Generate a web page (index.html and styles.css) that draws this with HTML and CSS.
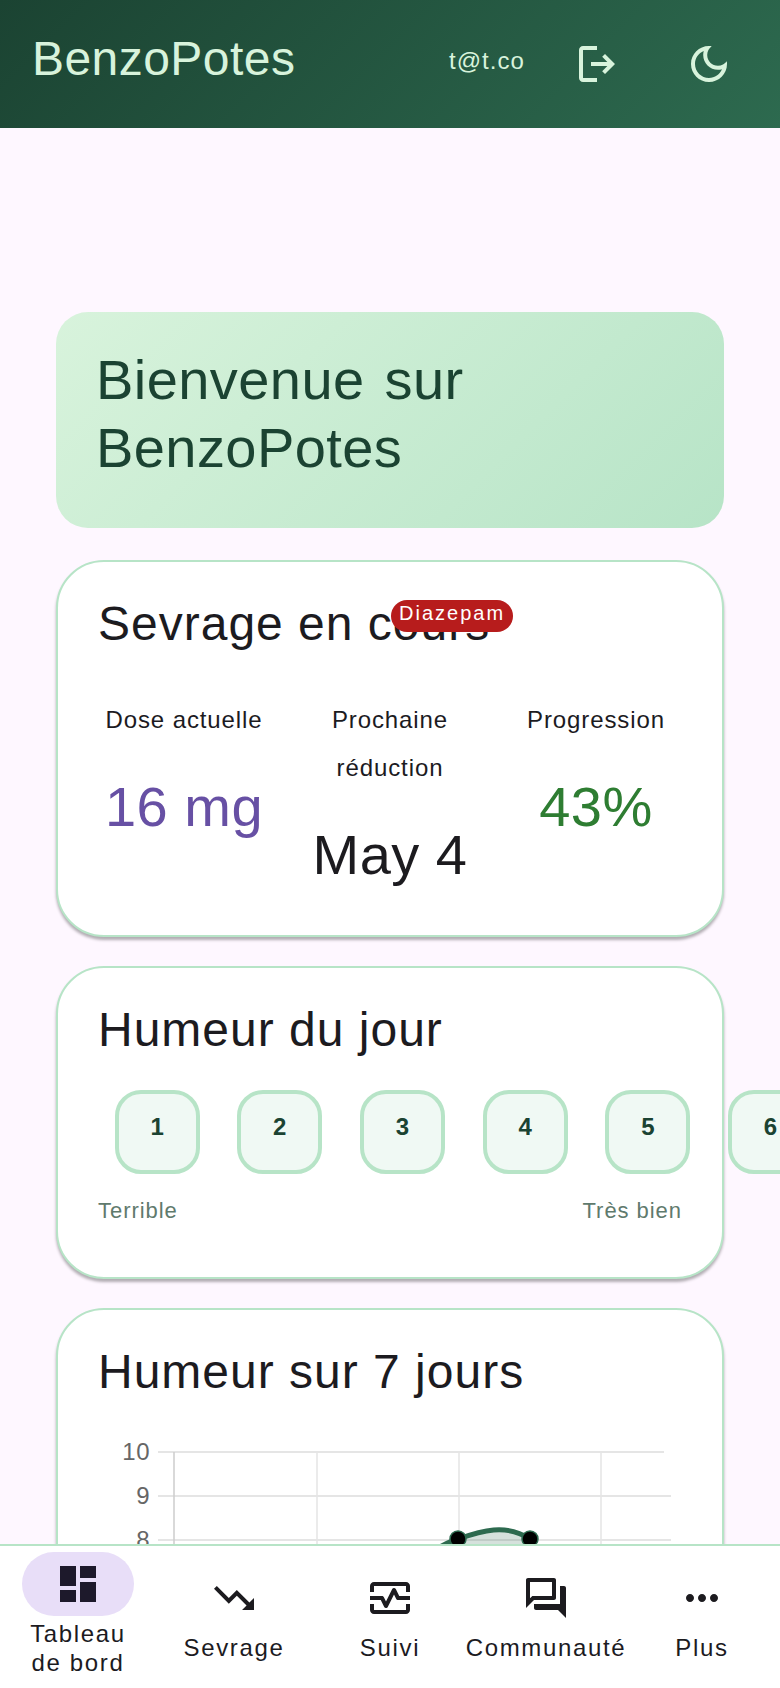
FILE: index.html
```html
<!DOCTYPE html>
<html lang="fr">
<head>
<meta charset="utf-8">
<title>BenzoPotes</title>
<link rel="stylesheet" href="styles.css">
</head>
<body>
<div class="app">
  <header class="topbar">
    <div class="brand">BenzoPotes</div>
    <div class="user">t@t.co</div>
    <button class="icon-btn logout" aria-label="Déconnexion">
      <svg viewBox="0 0 24 24"><path d="M5 5h7V3H5c-1.1 0-2 .9-2 2v14c0 1.1.9 2 2 2h7v-2H5V5zm11 2l5 5-5 5-1.41-1.41L17.17 13H9v-2h8.17l-2.58-2.59L16 7z"/></svg>
    </button>
    <button class="icon-btn moon" aria-label="Thème">
      <svg viewBox="0 0 24 24"><path d="M9.37 5.51c-.18.64-.27 1.31-.27 1.99 0 4.08 3.32 7.4 7.4 7.4.68 0 1.35-.09 1.99-.27C17.45 17.19 14.93 19 12 19c-3.86 0-7-3.14-7-7 0-2.93 1.81-5.45 4.37-6.49zM12 3c-4.97 0-9 4.03-9 9s4.03 9 9 9 9-4.03 9-9c0-.46-.04-.92-.1-1.36-.98 1.37-2.58 2.26-4.4 2.26-2.98 0-5.4-2.42-5.4-5.4 0-1.81.89-3.42 2.26-4.4-.44-.06-.9-.1-1.36-.1z"/></svg>
    </button>
  </header>

  <main class="content">
    <section class="hero"><h1>Bienvenue sur BenzoPotes</h1></section>

    <section class="card card-taper">
      <div class="card-head">
        <h2>Sevrage en cours</h2>
        <span class="badge">Diazepam</span>
      </div>
      <div class="stats">
        <div class="stat"><div class="stat-label">Dose actuelle</div><div class="stat-value purple">16 mg</div></div>
        <div class="stat"><div class="stat-label">Prochaine réduction</div><div class="stat-value">May 4</div></div>
        <div class="stat"><div class="stat-label">Progression</div><div class="stat-value green">43%</div></div>
      </div>
    </section>

    <section class="card card-mood">
      <h2>Humeur du jour</h2>
      <div class="moods">
        <button class="mood">1</button><button class="mood">2</button><button class="mood">3</button><button class="mood">4</button><button class="mood">5</button><button class="mood">6</button><button class="mood">7</button>
      </div>
      <div class="mood-scale"><span>Terrible</span><span>Très bien</span></div>
    </section>

    <section class="card card-chart">
      <h2>Humeur sur 7 jours</h2>
      <svg class="chart" viewBox="0 0 610 300">
        <g class="grid-h">
          <line x1="62" y1="11" x2="568" y2="11"/>
          <line x1="62" y1="55" x2="575" y2="55"/>
          <line x1="62" y1="99" x2="575" y2="99"/>
          <line x1="62" y1="143" x2="575" y2="143"/>
        </g>
        <g class="grid-v">
          <line x1="221" y1="11" x2="221" y2="200"/>
          <line x1="363" y1="11" x2="363" y2="200"/>
          <line x1="505" y1="11" x2="505" y2="200"/>
        </g>
        <line class="axis" x1="78" y1="11" x2="78" y2="200"/>
        <text class="tick" x="54" y="19">10</text>
        <text class="tick" x="54" y="63">9</text>
        <text class="tick" x="54" y="107">8</text>
        <path class="area" d="M300 135C325 118 345 103 362 98C385 90 410 82 434 98L434 200L300 200Z"/>
        <path class="line" d="M300 135C325 118 345 103 362 98C385 90 410 82 434 98"/>
        <circle class="dot" cx="362" cy="98" r="8"/>
        <circle class="dot" cx="434" cy="98" r="8"/>
      </svg>
    </section>
  </main>

  <nav class="bottom-nav">
    <a class="nav-item active">
      <span class="nav-icon"><svg viewBox="0 0 24 24"><path d="M3 13h8V3H3v10zm0 8h8v-6H3v6zm10 0h8V11h-8v10zm0-18v6h8V3h-8z"/></svg></span>
      <span class="nav-label">Tableau de bord</span>
    </a>
    <a class="nav-item">
      <span class="nav-icon"><svg viewBox="0 0 24 24"><path d="M16 18l2.29-2.29-4.88-4.88-4 4L2 7.41 3.41 6l6 6 4-4 6.3 6.29L22 12v6z"/></svg></span>
      <span class="nav-label">Sevrage</span>
    </a>
    <a class="nav-item">
      <span class="nav-icon"><svg viewBox="0 0 24 24"><path d="M20 4H4c-1.1 0-2 .9-2 2v3h2V6h16v3h2V6c0-1.1-.9-2-2-2zM20 18H4v-3H2v3c0 1.1.9 2 2 2h16c1.1 0 2-.9 2-2v-3h-2v3zM14.89 7.55c-.34-.68-1.45-.68-1.79 0L10 13.76l-1.11-2.21C8.72 11.21 8.37 11 8 11H2v2h5.38l1.72 3.45c.18.34.52.55.9.55s.72-.21.89-.55L14 10.24l1.11 2.21c.17.34.52.55.89.55h6v-2h-5.38l-1.72-3.45z"/></svg></span>
      <span class="nav-label">Suivi</span>
    </a>
    <a class="nav-item">
      <span class="nav-icon"><svg viewBox="0 0 24 24"><path d="M15 4v7H5.17L4 12.17V4h11m1-2H3c-.55 0-1 .45-1 1v14l4-4h10c.55 0 1-.45 1-1V3c0-.55-.45-1-1-1zm5 4h-2v9H6v2c0 .55.45 1 1 1h11l4 4V7c0-.55-.45-1-1-1z"/></svg></span>
      <span class="nav-label">Communauté</span>
    </a>
    <a class="nav-item">
      <span class="nav-icon"><svg viewBox="0 0 24 24"><path d="M6 10c-1.1 0-2 .9-2 2s.9 2 2 2 2-.9 2-2-.9-2-2-2zm12 0c-1.1 0-2 .9-2 2s.9 2 2 2 2-.9 2-2-.9-2-2-2zm-6 0c-1.1 0-2 .9-2 2s.9 2 2 2 2-.9 2-2-.9-2-2-2z"/></svg></span>
      <span class="nav-label">Plus</span>
    </a>
  </nav>
</div>
</body>
</html>
```
FILE: styles.css
```css
* { box-sizing: border-box; }
html, body { margin: 0; height: 100%; overflow: hidden; }
body { background: #fef7ff; color: #1c1b1f; font-family: "Liberation Sans", Arial, sans-serif; }
.app { height: 1688px; overflow: hidden; }

.topbar {
  height: 128px;
  display: flex;
  align-items: center;
  padding: 0 47px 0 32px;
  color: #d8f3dc;
  background: linear-gradient(135deg, #1b4332, #2d6a4f);
}
.brand { font-size: 48px; letter-spacing: 0.45px; line-height: 58px; margin-right: auto; padding-bottom: 10px; }
.user { font-size: 24px; letter-spacing: 1.05px; margin-top: -6px; }
.icon-btn { border: 0; padding: 0; background: none; display: flex; }
.icon-btn svg { width: 48px; height: 48px; fill: #d8f3dc; display: block; }
.logout { margin-left: 48px; }
.moon { margin-left: 64px; }

.content { padding: 184px 56px 0; display: flex; flex-direction: column; gap: 29px; }
.hero {
  height: 216px;
  padding: 34px 40px;
  margin-bottom: 3px;
  border-radius: 32px;
  background: linear-gradient(135deg, #d8f3dc, #b7e4c7);
  color: #1b4332;
}
.hero h1 { margin: 0; font-size: 56px; line-height: 68px; font-weight: 400; letter-spacing: 0.43px; word-spacing: 4px; }

.card {
  background: #fff;
  border: 2px solid #b7e4c7;
  border-radius: 48px;
  padding: 33px 40px 46px;
  box-shadow: 0 3px 3px rgba(0, 0, 0, 0.3);
}
.card h2 { margin: 0; font-size: 48px; line-height: 58px; font-weight: 400; letter-spacing: 1px; }
.card-head { position: relative; }
.badge {
  position: absolute;
  left: 293px;
  top: 5px;
  height: 32px;
  line-height: 26px;
  padding: 0 8px;
  border-radius: 16px;
  background: #b71c1c;
  color: #fff;
  font-size: 20px;
  letter-spacing: 2px;
}
.stats { display: grid; grid-template-columns: repeat(3, 176px); gap: 30px; margin: 43px -2px 0; text-align: center; }
.stat-label { font-size: 24px; line-height: 48px; letter-spacing: 0.9px; }
.stat-value { font-size: 56px; line-height: 68px; margin-top: 29px; letter-spacing: 0.5px; }
.purple { color: #6750a4; }
.green { color: #2e7d32; }

.moods { display: flex; gap: 37.7px; margin-top: 31px; padding-left: 16.6px; }
.mood {
  flex: none;
  width: 85px;
  height: 84px;
  padding: 0 0 10px;
  border: 4px solid #b7e4c7;
  border-radius: 26px;
  background: #f0f9f4;
  color: #1b4332;
  font: 700 24px "Liberation Sans", Arial, sans-serif;
}
.mood-scale { display: flex; justify-content: space-between; margin: 24px 0 7px; font-size: 22px; letter-spacing: 0.95px; color: #5f7a6d; }

.card-chart { height: 500px; }
.chart { display: block; width: 610px; height: 300px; margin: 40px 0 0 -2px; overflow: visible; }
.grid-h line, .grid-v line { stroke: #e5e5e5; stroke-width: 2; }
.grid-v line { stroke-width: 1.5; }
.axis { stroke: #cccccc; stroke-width: 1.5; }
.tick { font-size: 24px; fill: #666666; text-anchor: end; letter-spacing: 0.5px; }
.area { fill: rgba(45, 106, 79, 0.2); }
.line { fill: none; stroke: #2d6a4f; stroke-width: 5; }
.dot { fill: #000; stroke: #2d6a4f; stroke-width: 1.5; }

.bottom-nav {
  position: fixed;
  left: 0;
  right: 0;
  bottom: 0;
  height: 144px;
  display: flex;
  align-items: center;
  background: #fff;
  border-top: 2px solid #b7e4c7;
}
.nav-item { flex: 1 1 0; min-width: 0; display: flex; flex-direction: column; align-items: center; text-align: center; padding: 3px 0 1px; }
.nav-icon { display: block; height: 48px; }
.nav-icon svg { width: 48px; height: 48px; display: block; fill: #1c1b1f; }
.active { padding: 0; }
.active .nav-icon { height: 64px; width: 112px; padding: 8px 32px; border-radius: 32px; background: #e8def8; }
.active .nav-icon svg { fill: #1d192b; }
.nav-label { font-size: 24px; line-height: 29px; letter-spacing: 1.65px; margin-top: 11px; }
.active .nav-label { margin-top: 3px; width: 112px; padding-bottom: 5px; box-sizing: content-box; }
```
